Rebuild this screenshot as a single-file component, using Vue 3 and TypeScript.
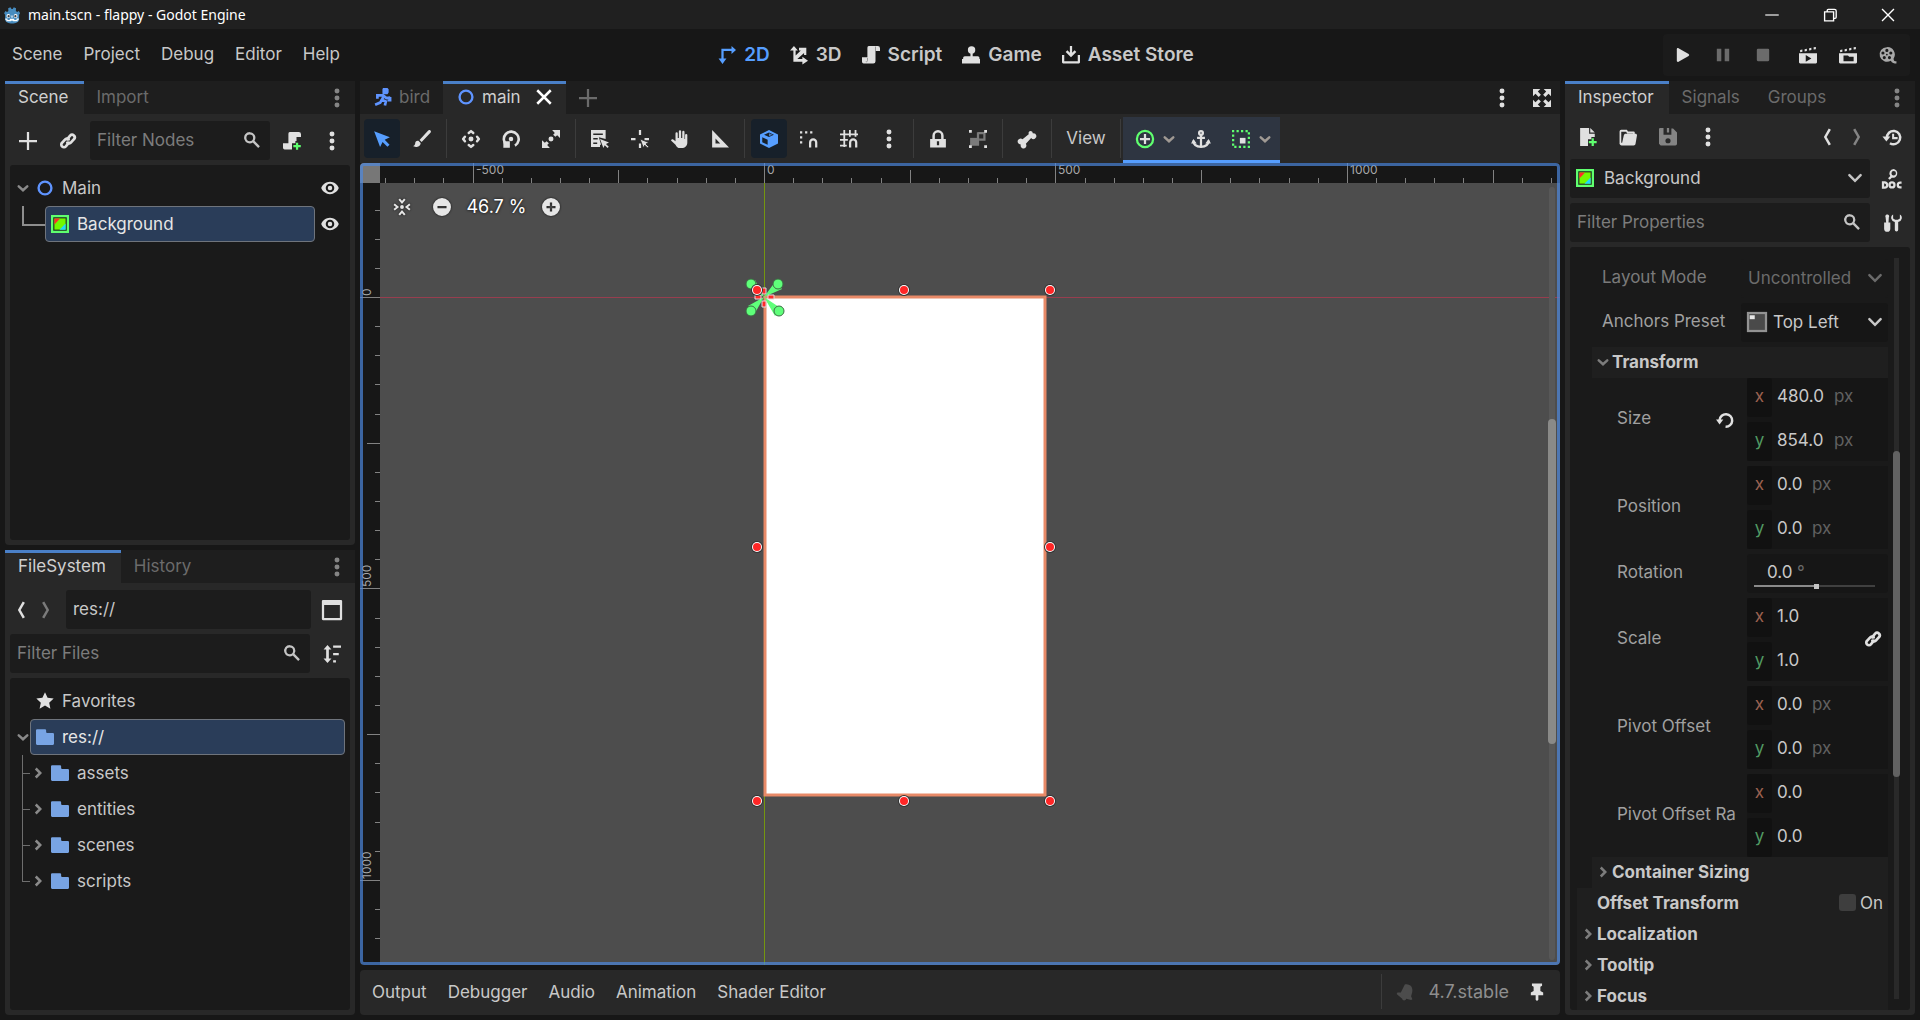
<script setup lang="ts">
import { computed, h, onBeforeUnmount, onMounted, ref } from 'vue'

const magnet = '<path d="M9 15.500v-4.500a2.700 2.700 0 0 1 5.400 0v4.500" fill="none" stroke="currentColor" stroke-width="2"/>'
const cursor = '<path d="M8 8l8 3.2-2.700 1.200 2.500 2.500-1.100 1.100-2.500-2.500L11 16z"/>'
const clapper = '<path d="M1 3.600l2-.4v2l-2 .4zM5 2.800l2-.4v2l-2 .4zM9 2l2-.4v2L9 4zM13 1.200l2-.4v2l-2 .4z"/>'

const icons: Record<string, string> = {
  logo:
    '<path fill="#478cbf" d="M1 6.5l1.2-2 1.4.8 1.2-.8L4.6 2l2-1 1 1.600h1l1-1.600 2 1-.2 2.500 1.200.8 1.400-.8 1.200 2-.9 1.200V12c0 2.500-3.200 3.500-6.200 3.500S1.900 14.500 1.900 12V7.700z"/><g fill="#fff"><circle cx="4.800" cy="8.800" r="1.700"/><circle cx="11.200" cy="8.800" r="1.700"/><path d="M7.500 8.500h1v2h-1z"/><path d="M2 11.200h2v1.200h2v-1h4v1h2v-1.200h2v1h-1v1.400H9V13H7v.6H3v-1.400H2z"/></g><g fill="#414042"><circle cx="5" cy="9" r="1"/><circle cx="11" cy="9" r="1"/></g>',
  add: '<path d="M7 0v7H0v2h7v7h2V9h7V7H9V0z"/>',
  close: '<path d="M2 2l12 12M14 2L2 14" fill="none" stroke="currentColor" stroke-width="2.200"/>',
  link: '<g fill="none" stroke="currentColor" stroke-width="2.400" stroke-linecap="round"><path d="M7.200 6.500L9.900 3.200a2.300 2.300 0 0 1 3.400 3.200L10.700 9.300a2.300 2.300 0 0 1-3.300.2"/><path d="M8.800 9.500l-2.700 3.300a2.300 2.300 0 0 1-3.400-3.200L5.300 6.700a2.300 2.300 0 0 1 3.300-.2"/></g>',
  search: '<path d="M6 1a5 5 0 1 0 2.700 9.200l4.800 4.800 1.500-1.500-4.800-4.800A5 5 0 0 0 6 1zm0 2a3 3 0 1 1 0 6 3 3 0 0 1 0-6z"/>',
  script: '<path d="M6 0a1.500 1.500 0 0 0-1.200 1.500V10H0v4a1.500 1.500 0 0 0 1.500 1.500H10a2 2 0 0 0 2-2V4.500h4V2a2 2 0 0 0-2-2z"/><path d="M4.900 10.500V13a1 1 0 0 1-1.500.9M12 .5v4" fill="none" stroke="#909090" stroke-width=".8"/>',
  scriptAdd: '<path d="M6 0a1.500 1.500 0 0 0-1.200 1.500V10H0v4a1.500 1.500 0 0 0 1.500 1.500H8V10h3V8h1V4.500h4V2a2 2 0 0 0-2-2z"/><path d="M11.500 9.500h2v2h2.300v2h-2.300v2.300h-2v-2.300H9.200v-2h2.300z" fill="#5fff6f"/>',
  dots: '<circle cx="8" cy="1.700" r="2.200"/><circle cx="8" cy="8" r="2.200"/><circle cx="8" cy="14.300" r="2.200"/>',
  down: '<path d="M3 5.500l5 5 5-5" fill="none" stroke="currentColor" stroke-width="2.200" stroke-linecap="round"/>',
  smallDown: '<path d="M4.200 6.500L8 10l3.800-3.500" fill="none" stroke="currentColor" stroke-width="2.200" stroke-linecap="round"/>',
  smallRight: '<path d="M6 4l4 4-4 4" fill="none" stroke="currentColor" stroke-width="2.200"/>',
  back: '<path d="M10.500 1L6.500 8l4 7" fill="none" stroke="currentColor" stroke-width="2.200"/>',
  forward: '<path d="M5.500 1l4 7-4 7" fill="none" stroke="currentColor" stroke-width="2.200"/>',
  eye: '<path fill-rule="evenodd" d="M8 2.500C4.500 2.500 1.300 5 .2 8c1.100 3 4.300 5.500 7.800 5.500S14.700 11 15.800 8C14.700 5 11.500 2.500 8 2.500zm0 1.700a3.800 3.800 0 1 1 0 7.600 3.800 3.800 0 0 1 0-7.600zm0 1.800a2 2 0 1 0 0 4 2 2 0 0 0 0-4z"/>',
  node: '<circle cx="8" cy="8" r="5.700" fill="none" stroke="#5f94ff" stroke-width="2.100"/>',
  runner: '<g fill="none" stroke="#5f94ff" stroke-width="2.400"><path d="M9 6.500L7 10.500l3.500 1.500-.8 3.500M7 10.500L5.500 13 1 14.800M3 9.500V6.500h5l3 2.500 3.500-.5"/></g><path d="M8 0h4l1 1v3l-1 1.500H8.500L7.500 5V1zM13 8h2.500v4H12v-2h1z" fill="#5f94ff"/>',
  colorRect: '<path fill="#5fff6f" d="M0 0h16v16H0z"/><path fill="#1a2a1c" d="M2 2h12v12H2z"/><path fill="#71f900" d="M3 3h10v10H3z"/><path fill="#ff2b2b" d="M3 3h5L3 8.500z"/><path fill="#1fd6ff" d="M13 7.500V13H7.500z"/>',
  axis2d: '<path d="M12 0l4 3.500L12 7V4.500H5V11h2.500L4 16 .5 11H3V2.500h9z"/>',
  axis3d: '<path d="M3.500 0L7 4H5v4.500L9.600 4H8V1.500h6.500V8h-2V6.200L6.500 11.500H11v-2l5 3.700-5 3.300v-2.500H3V4H0z"/>',
  game: '<circle cx="8.500" cy="3.500" r="3.300"/><path d="M7.500 5h2v4h4.500a1.500 1.500 0 0 1 1.500 1.500V12H1v-1.500A1.500 1.500 0 0 1 2.500 9h5zM0 11.500h16v4H0z"/>',
  store: '<path d="M7 0h2v6l2.200-2.200 1.500 1.500L8 10 3.300 5.300l1.500-1.500L7 6zM0 8h2v5.500h12V8h2v6.500a1 1 0 0 1-1 1H1a1 1 0 0 1-1-1z"/>',
  select: '<path d="M1 1l14 5.500-4.600 2.200 4.300 4.300-1.900 1.900-4.300-4.300L6.300 15z"/>',
  brush: '<path d="M15.500.4c-.7-.7-1.500-.5-2 0L5.800 8.800l1.900 1.900 7.800-8.200c.6-.5.600-1.500 0-2.100zM4.800 9.500C2.800 9.200 2 10.500 2 11.500c0 1.500-.8 2.300-2 2.800 1.500 1.300 6.800 1.200 6.800-2.800z"/>',
  move: '<circle cx="8" cy="8" r="2.200"/><g fill="none" stroke="currentColor" stroke-width="2.200" stroke-linecap="round" stroke-linejoin="round"><path d="M6 2.600L8 1l2 1.600M6 13.400L8 15l2-1.600M2.600 6L1 8l1.600 2M13.400 6L15 8l-1.600 2"/></g>',
  rotate: '<circle cx="8" cy="8" r="2"/><path d="M4.500 13.500A6.600 6.600 0 1 1 11.500 13.800" fill="none" stroke="currentColor" stroke-width="2.300"/><path d="M1.200 10H7v5.800H1.200z"/>',
  scale: '<circle cx="8" cy="8" r="2.200"/><path d="M9 0h7v7l-2.500-2.400-1.600 1.500L9.900 4.200l1.500-1.600zM0 9l2.500 2.400 1.600-1.500 2 1.900-1.500 1.600L7 16H0z"/>',
  list: '<path fill-rule="evenodd" d="M0 0h13v8L7 6.500 9 13H8v2H0zm2 3v1.500h8.500V3zm0 4v1.500h4V7zm0 4v1.500h3.500V11z"/>' + cursor,
  pivot: '<path d="M7 0h2v4.500H7zM0 7h4v2H0zM12 7h4v2h-4zM7 12h2v4H7z"/><g stroke="#2a2a2a" stroke-width=".8">' + cursor + '</g>',
  hand: '<path d="M7 1.200a1 1 0 0 1 2 0V7h1V1.700a1 1 0 0 1 2 0V8h.5V4.500a1 1 0 0 1 2 0V11c0 3-2 5-5 5H8c-2 0-3-1-4-3L0 9.300c.5-1.300 1.800-1.300 2.600-.5L4 10V3a1 1 0 0 1 2 0v4h1z"/>',
  ruler: '<path fill-rule="evenodd" d="M1 0v15.500h15zm3 7.500l4.200 4.500H4z"/>',
  cube: '<path fill-rule="evenodd" d="M8 0l8 4v8l-8 4-8-4V4zM8 2.200L3.600 4.300 8 6.300l4.400-2zM2 6.500v4.300l4.800 2.200V8.600z"/><path d="M8 2.800l3.200 1.500L8 5.600z" fill="currentColor" opacity=".7"/>',
  smartSnap: '<path d="M0 1h2v2H0zM4.500 1h2v2h-2zM9 1h2v2H9zM0 5.500h2v2H0zM0 10h2v2H0z"/>' + magnet,
  gridSnap: '<path d="M3 0h1.600v15H3zM8 0h1.600v6H8zM13 0h1.600v6H13zM0 3h16v1.600H0zM0 8h7v1.600H0zM0 13h6v1.600H0z"/>' + magnet,
  lock: '<path fill-rule="evenodd" d="M8 0a5 5 0 0 0-5 5v3H1v7.500h14V8h-2V5a5 5 0 0 0-5-5zm0 2.200A2.800 2.800 0 0 1 10.800 5v3H5.200V5A2.800 2.800 0 0 1 8 2.200zM7 10h2v3.500H7z"/>',
  group: '<g opacity=".45"><path d="M1 7h8v7H1z"/><path d="M8.200 2.800h5.500v5.700H9" fill="none" stroke="currentColor" stroke-width="2"/><path d="M7 2h2v6H7z"/></g><path d="M0 0h2.500v2.500H0zM13.500 0H16v2.500h-2.500zM0 13.500h2.500V16H0zM13.500 13.500H16V16h-2.500z"/>',
  bone: '<path d="M10.500.800a2.500 2.500 0 0 0-1 3L4 8.300a2.600 2.600 0 1 0-1.500 4.500 2.600 2.600 0 1 0 4.500-.5l4.700-5.200A2.600 2.600 0 1 0 13.300 3 2.600 2.600 0 0 0 10.500.800z"/>',
  containerAdd: '<circle cx="8" cy="8" r="7.200" fill="none" stroke="#5fff6f" stroke-width="2"/><path d="M7 3.500h2V7h3.500v2H9v3.500H7V9H3.500V7H7z"/>',
  anchor: '<g fill="none" stroke="currentColor" stroke-width="2"><circle cx="8" cy="2.600" r="1.700"/><path d="M8 4.500V14M4.500 7h7M1.200 9.500c.2 3.500 3 5.400 6.800 5.400s6.600-1.900 6.800-5.400"/></g><path d="M1.200 8l3 4h-5zM14.800 8l2 4h-5z"/>',
  containerLayout: '<path d="M1 1h14v14H1z" fill="none" stroke="#5fff6f" stroke-width="2" stroke-dasharray="2 2" stroke-dashoffset="1"/><path d="M7 7h5v5H7z"/>',
  expand: '<path d="M9.500 0H16v6.500l-2.200-2.200L11 7 9 5l2.700-2.800zM6.500 0H0v6.500l2.200-2.200L5 7l2-2-2.700-2.800zM9.500 16H16V9.500l-2.200 2.200L11 9l-2 2 2.700 2.800zM6.500 16H0V9.500l2.200 2.200L5 9l2 2-2.700 2.800z"/>',
  center: '<circle cx="8" cy="8" r="1.700"/><path d="M5.500 1L8 4l2.500-3M5.500 15L8 12l2.500 3M1 5.500L4 8l-3 2.500M15 5.500L12 8l3 2.500" fill="none" stroke="currentColor" stroke-width="1.800"/>',
  minus: '<path fill-rule="evenodd" d="M8 0a8 8 0 1 1 0 16A8 8 0 0 1 8 0zM4 7v2h8V7z"/>',
  plus: '<path fill-rule="evenodd" d="M8 0a8 8 0 1 1 0 16A8 8 0 0 1 8 0zM7 4v3H4v2h3v3h2V9h3V7H9V4z"/>',
  play: '<path d="M2.500 2.800v10.400c0 .8.800 1.200 1.500.8l9-5.200a1 1 0 0 0 0-1.600l-9-5.200C3.300 1.600 2.500 2 2.500 2.800z"/>',
  pause: '<path d="M2.500 2.500h4v11h-4zM9.500 2.500h4v11h-4z"/>',
  stop: '<rect x="2.500" y="2.500" width="11" height="11" rx="1"/>',
  playScene: clapper + '<path fill-rule="evenodd" d="M0 6.500h16v8a1 1 0 0 1-1 1H1a1 1 0 0 1-1-1zm6 1.500v6l5-3z"/>',
  playCustom: clapper + '<path fill-rule="evenodd" d="M0 6.500h16v8a1 1 0 0 1-1 1H1a1 1 0 0 1-1-1zm4 2v5h9v-4H9l-1-1z"/>',
  movie: '<path fill-rule="evenodd" d="M7 1a6.500 6.500 0 1 0 3.500 12c1 2 3 2.500 5 2.500v-2c-2 0-2.500-.5-2.500-2.500A6.500 6.500 0 0 0 7 1zm0 1.500a1.400 1.400 0 1 1 0 2.800 1.400 1.400 0 0 1 0-2.800zM3.500 4.800a1.400 1.400 0 1 1 0 2.800 1.400 1.400 0 0 1 0-2.800zm7 0a1.400 1.400 0 1 1 0 2.800 1.400 1.400 0 0 1 0-2.800zM7 6.800a.8.800 0 1 1 0 1.600.8.800 0 0 1 0-1.600zM4.700 8.900a1.400 1.400 0 1 1 0 2.800 1.400 1.400 0 0 1 0-2.800zm4.600 0a1.400 1.400 0 1 1 0 2.800 1.400 1.400 0 0 1 0-2.800z"/>',
  newFile: '<path d="M1 0h8v5h5v3h-3v2H8v6H1z"/><path d="M10 0l4 4h-4z"/><path d="M11.200 9h2v2.500h2.500v2h-2.500V16h-2v-2.500H8.700v-2h2.500z" fill="#5fff6f"/>',
  open: '<path d="M2 1.500A1.500 1.500 0 0 0 .5 3v10A2 2 0 0 0 2.500 15.500H13c1 0 1.500-.5 1.700-1.500L16 6.500C16 5.500 15.500 5 14.500 5H14V4a1 1 0 0 0-1-1H8L7 1.500zM2 3.300h4.300l1 1.500H12.500V5H6C5 5 4.500 5.500 4.300 6.500L2.800 13H2z" fill-rule="evenodd"/>',
  save: '<path fill-rule="evenodd" d="M1 0v0A1 1 0 0 0 0 1v13l1.500 1.500H14.500A1.500 1.500 0 0 0 16 14V4L12.500.5H11V6H4V0zm6 0v4h2V0zm1 9a2.300 2.300 0 1 1 0 4.600A2.300 2.300 0 0 1 8 9z"/>',
  history: '<path d="M3.500 9a5.900 5.900 0 1 1 2.700 4.500" fill="none" stroke="currentColor" stroke-width="2.200"/><path d="M-.5 7.500h7L3 12z"/><path d="M9 5v4h4" fill="none" stroke="currentColor" stroke-width="1.800"/>',
  doc: '<path d="M9.500-1a3.900 3.900 0 0 0-3 6.300L4.500 7.300 6 8.600l1.800-1.700A3.900 3.900 0 1 0 9.500-1zm0 1.900a2 2 0 1 1 0 4 2 2 0 0 1 0-4z" fill-rule="evenodd"/><g fill="none" stroke="currentColor" stroke-width="2"><path d="M0 11v4.700h1.400a2.350 2.350 0 0 0 0-4.700z"/><circle cx="8" cy="13.300" r="2.200"/><path d="M16.500 11.200h-1.200a2.150 2.150 0 0 0 0 4.300h1.200"/></g>',
  tools: '<path d="M3.500.5a1.500 1.500 0 0 0-1.200 2.300L2.800 7.500H1V13a2.700 2.700 0 0 0 5.500 0V7.500H4.900L5.200 2.800A1.500 1.500 0 0 0 3.500.5zM9 .5A3.500 3.500 0 0 0 10.500 7v7a1.500 1.500 0 0 0 3 0V7A3.500 3.500 0 0 0 15 .5V4l-1.800 1h-2.400L9 4z"/>',
  revert: '<path d="M3.200 8a5.600 5.600 0 1 1 5.300 6" fill="none" stroke="currentColor" stroke-width="2.200"/><path d="M0 7.500h6.500L3.200 12z"/>',
  bell: '<path d="M6 1.500c4.500-1.500 8 1.500 7.500 6L13 11l1.500 2.500-1 1L9 14c0 2-3 2.500-3.500.5L0 11l.5-1.500L3.500 9z" transform="rotate(8 8 8)"/>',
  pin: '<path d="M3.500.5h9v2l-1.500.8V7l2.500 1.500v2.300H9.200v4L8 16l-1.200-1.200v-4H2.500V8.500L5 7V3.300l-1.500-.8z"/>',
  star: '<path d="M8 .3l2.300 4.900 5.400.6-4 3.700 1.100 5.300L8 12.100l-4.800 2.700 1.100-5.300L.3 5.800l5.400-.6z"/>',
  folder: '<path fill="#78a4e4" d="M1 1a1 1 0 0 0-1 1v12a1 1 0 0 0 1 1h14a1 1 0 0 0 1-1V5.500a1 1 0 0 0-1-1h-5a1 1 0 0 1-1-1V2a1 1 0 0 0-1-1z"/>',
  panel: '<path fill-rule="evenodd" d="M0-1h16a1 1 0 0 1 1 1v16a1 1 0 0 1-1 1H0a1 1 0 0 1-1-1V0a1 1 0 0 1 1-1zm1 4.500V15h14V3.500z"/>',
  sort: '<path d="M4 0l3.500 4H5.200v8h2.300L4 16 .5 12h2.300V4H.5zM9 .5h7v2H9zM9 7h5v2H9zM9 13.500h2.500v2H9z"/>',
  preset: '<path fill="#929292" d="M-1-1h18v18H-1z"/><path fill="#4a4a4a" d="M1 1h14v14H1z"/><path fill="#e6e6e6" d="M1.500 2h4.500v3.500H1.500z"/>',
  winMin: '<path d="M2 8h12" stroke="currentColor" fill="none" stroke-width="1"/>',
  winRestore: '<path d="M3.200 5.200h8v8h-8zM5.500 5V4a1 1 0 0 1 1-1H12a1.500 1.500 0 0 1 1.500 1.500V10a1 1 0 0 1-1 1h-1" stroke="currentColor" fill="none" stroke-width="1.200"/>',
  winClose: '<path d="M2.700 2.700l10.600 10.600M13.300 2.700L2.700 13.300" stroke="currentColor" fill="none" stroke-width="1.200"/>',
}

const Icon = (props: { n: string }) =>
  h('svg', { class: 'ic', viewBox: '0 0 16 16', 'aria-hidden': 'true', innerHTML: icons[props.n] })
Icon.props = ['n']

const menus = ['Scene', 'Project', 'Debug', 'Editor', 'Help']
const screens = [
  { n: 'axis2d', t: '2D' },
  { n: 'axis3d', t: '3D' },
  { n: 'script', t: 'Script' },
  { n: 'game', t: 'Game' },
  { n: 'store', t: 'Asset Store' },
]
const runButtons = ['play', 'pause', 'stop', 'playScene', 'playCustom', 'movie']
const toolGroups = [
  ['select', 'brush'],
  ['move', 'rotate', 'scale'],
  ['list', 'pivot', 'hand', 'ruler'],
  ['cube', 'smartSnap', 'gridSnap', 'dots'],
  ['lock', 'group'],
  ['bone'],
]
const folders = ['assets', 'entities', 'scenes', 'scripts']
const panels = ['Output', 'Debugger', 'Audio', 'Animation', 'Shader Editor']
const sections = ['Localization', 'Tooltip', 'Focus']

interface Vec { label: string; x: string; y: string; unit: string; extra?: string }
const before: Vec[] = [
  { label: 'Size', x: '480.0', y: '854.0', unit: 'px', extra: 'revert' },
  { label: 'Position', x: '0.0', y: '0.0', unit: 'px' },
]
const after: Vec[] = [
  { label: 'Scale', x: '1.0', y: '1.0', unit: '', extra: 'link' },
  { label: 'Pivot Offset', x: '0.0', y: '0.0', unit: 'px' },
  { label: 'Pivot Offset Ra', x: '0.0', y: '0.0', unit: '' },
]
const numWidth = (s: string) => ({ width: `${s.length * 11 - 7}px` })
const rotation = ref(52)
const offsetOn = ref(false)

// Canvas view: one ruler step is 50 scene units.
const view = ref<HTMLElement>()
const size = ref({ w: 0, h: 0 })
const origin = { x: 404, y: 134 }
const step = 29.14
interface Tick { p: number; len: number; label: string }
function ticks(start: number, end: number): Tick[] {
  const out: Tick[] = []
  for (let i = Math.ceil((21 - start) / step); start + i * step < end; i++) {
    const len = i % 10 === 0 ? 20 : i % 5 === 0 ? 13 : 5
    out.push({ p: Math.round(start + i * step), len, label: i % 10 === 0 ? String(i * 50) : '' })
  }
  return out
}
const hTicks = computed(() => ticks(origin.x, size.value.w))
const vTicks = computed(() => ticks(origin.y, size.value.h))
let observer: ResizeObserver | undefined
function measure() {
  if (view.value) size.value = { w: view.value.clientWidth, h: view.value.clientHeight }
}
onMounted(() => {
  measure()
  observer = new ResizeObserver(measure)
  observer.observe(view.value!)
})
onBeforeUnmount(() => observer?.disconnect())

const handles = [
  [397, 127], [544, 127], [690, 127], [397, 384], [690, 384], [397, 638], [544, 638], [690, 638],
]
const pins = [[391, 121], [418, 121], [391, 148], [419, 148]]
</script>

<template>
  <div class="app">
    <header class="title">
      <Icon n="logo" />
      <span class="title-text">main.tscn - flappy - Godot Engine</span>
      <div class="win">
        <button aria-label="Minimize"><Icon n="winMin" /></button>
        <button aria-label="Restore"><Icon n="winRestore" /></button>
        <button aria-label="Close"><Icon n="winClose" /></button>
      </div>
    </header>

    <div class="menubar">
      <nav class="menus"><button v-for="m in menus" :key="m">{{ m }}</button></nav>
      <nav class="screens">
        <button v-for="(s, i) in screens" :key="s.t" :class="{ on: i === 0 }"><Icon :n="s.n" />{{ s.t }}</button>
      </nav>
      <div class="run">
        <button v-for="r in runButtons" :key="r" :class="r" :aria-label="r"><Icon :n="r" /></button>
      </div>
    </div>

    <main class="work">
      <div class="side">
        <section class="dock">
          <div class="tabs">
            <button class="tab on">Scene</button><button class="tab">Import</button>
            <button class="more" aria-label="Dock options"><Icon n="dots" /></button>
          </div>
          <div class="body">
            <div class="row">
              <button class="tool" aria-label="Add node"><Icon n="add" /></button>
              <button class="tool" aria-label="Instance scene"><Icon n="link" /></button>
              <div class="field grow"><input placeholder="Filter Nodes" aria-label="Filter Nodes" /><Icon n="search" /></div>
              <button class="tool" aria-label="Attach script"><Icon n="scriptAdd" /></button>
              <button class="tool" aria-label="More"><Icon n="dots" /></button>
            </div>
            <div class="tree">
              <div class="item">
                <span class="arrow"><Icon n="smallDown" /></span>
                <span class="cell"><Icon n="node" />Main</span>
                <Icon n="eye" class="eye" />
              </div>
              <div class="item">
                <span class="elbow"></span>
                <span class="cell sel"><Icon n="colorRect" />Background</span>
                <Icon n="eye" class="eye" />
              </div>
            </div>
          </div>
        </section>

        <section class="dock">
          <div class="tabs">
            <button class="tab on">FileSystem</button><button class="tab">History</button>
            <button class="more" aria-label="Dock options"><Icon n="dots" /></button>
          </div>
          <div class="body">
            <div class="row path">
              <button class="nav" aria-label="Back"><Icon n="back" /></button>
              <button class="nav dim" aria-label="Forward"><Icon n="forward" /></button>
              <div class="field grow"><input value="res://" aria-label="Path" /></div>
              <button class="tool" aria-label="Split mode"><Icon n="panel" /></button>
            </div>
            <div class="row">
              <div class="field grow"><input placeholder="Filter Files" aria-label="Filter Files" /><Icon n="search" /></div>
              <button class="tool" aria-label="Sort"><Icon n="sort" /></button>
            </div>
            <div class="tree">
              <div class="item"><span class="arrow"></span><span class="cell"><Icon n="star" />Favorites</span></div>
              <div class="item"><span class="arrow"><Icon n="smallDown" /></span><span class="cell sel"><Icon n="folder" />res://</span></div>
              <div v-for="f in folders" :key="f" class="item branch">
                <span class="twig"></span><span class="arrow"><Icon n="smallRight" /></span>
                <span class="cell"><Icon n="folder" />{{ f }}</span>
              </div>
            </div>
          </div>
        </section>
      </div>

      <div class="center">
        <div class="tabs">
          <button class="tab scene"><Icon n="runner" />bird</button>
          <button class="tab scene on"><Icon n="node" />main<Icon n="close" class="x" /></button>
          <button class="plus" aria-label="New scene"><Icon n="add" /></button>
          <button class="more first" aria-label="Scene options"><Icon n="dots" /></button>
          <button class="more" aria-label="Distraction free"><Icon n="expand" /></button>
        </div>
        <div class="toolbar">
          <template v-for="(g, gi) in toolGroups" :key="gi">
            <button v-for="t in g" :key="t" class="tool" :class="{ on: t === 'select' || t === 'cube' }" :aria-label="t"><Icon :n="t" /></button>
            <i class="sep"></i>
          </template>
          <button class="view">View</button>
          <i class="sep"></i>
          <div class="context">
            <button class="tool wide" aria-label="Container"><Icon n="containerAdd" /><Icon n="smallDown" class="chev" /></button>
            <button class="tool" aria-label="Anchor"><Icon n="anchor" /></button>
            <button class="tool wide" aria-label="Layout"><Icon n="containerLayout" /><Icon n="smallDown" class="chev" /></button>
          </div>
        </div>
        <div ref="view" class="viewport">
          <svg class="canvas" width="100%" height="100%">
            <rect width="100%" height="100%" fill="#4d4d4d" />
            <rect x="0" y="134" width="100%" height="1" fill="#b03a50" opacity=".75" />
            <rect x="404" y="0" width="1" height="100%" fill="#74960f" />
            <rect x="405" y="134" width="280" height="498" fill="#fff" stroke="#e88a68" stroke-width="3" />
            <g fill="#171717"><rect width="100%" height="20" /><rect width="20" height="100%" /></g>
            <g fill="#828282">
              <rect v-for="t in hTicks" :key="t.p" :x="t.p" :y="20 - t.len" width="1" :height="t.len" />
              <rect v-for="t in vTicks" :key="t.p" :y="t.p" :x="20 - t.len" height="1" :width="t.len" />
            </g>
            <g class="marks">
              <text v-for="t in hTicks" :key="t.p" :x="t.p + 3" y="11">{{ t.label }}</text>
              <text v-for="t in vTicks" :key="t.p" :transform="`translate(11 ${t.p - 1}) rotate(-90)`">{{ t.label }}</text>
            </g>
            <rect width="20" height="20" fill="#777" />
            <g fill="#5fff7a" stroke="#3b6b43" stroke-width="1">
              <path d="M404 134l11-15 7 7zM404 134l-16-10 7-7zM404 134l-9 16-7-7zM404 134l18 12-7 7z" stroke="none" />
              <circle v-for="p in pins" :key="p.join()" :cx="p[0]" :cy="p[1]" r="5" />
            </g>
            <g fill="#ff2a2a" stroke="#ddd" stroke-width="1">
              <path d="M402 125h4v6h-4zM402 138h4v6h-4zM395 132h6v4h-6zM408 132h6v4h-6z" />
            </g>
            <g v-for="p in handles" :key="p.join()">
              <circle :cx="p[0]" :cy="p[1]" r="6" fill="#333" /><circle :cx="p[0]" :cy="p[1]" r="5" fill="#fff" /><circle :cx="p[0]" :cy="p[1]" r="4" fill="#ff2626" />
            </g>
          </svg>
          <div class="zoom">
            <button aria-label="Center view"><Icon n="center" /></button>
            <button aria-label="Zoom out"><Icon n="minus" /></button>
            <span>46.7 %</span>
            <button aria-label="Zoom in"><Icon n="plus" /></button>
          </div>
          <div class="vscroll"><span></span></div>
          <div class="focus"></div>
        </div>
        <footer class="bottom">
          <button v-for="p in panels" :key="p">{{ p }}</button>
          <i class="sep"></i>
          <Icon n="bell" class="bell" />
          <span class="version">4.7.stable</span>
          <button class="pinned" aria-label="Pin panel"><Icon n="pin" /></button>
        </footer>
      </div>

      <div class="side">
        <section class="dock">
          <div class="tabs">
            <button class="tab on">Inspector</button><button class="tab">Signals</button><button class="tab">Groups</button>
            <button class="more" aria-label="Dock options"><Icon n="dots" /></button>
          </div>
          <div class="body">
            <div class="row res">
              <button class="tool" aria-label="New resource"><Icon n="newFile" /></button>
              <button class="tool" aria-label="Load"><Icon n="open" /></button>
              <button class="tool dim" aria-label="Save"><Icon n="save" /></button>
              <button class="tool" aria-label="More"><Icon n="dots" /></button>
              <span class="grow"></span>
              <button class="nav" aria-label="Previous"><Icon n="back" /></button>
              <button class="nav dim" aria-label="Next"><Icon n="forward" /></button>
              <button class="tool" aria-label="History"><Icon n="history" /></button>
            </div>
            <div class="row">
              <button class="field grow object"><Icon n="colorRect" /><span class="grow">Background</span><Icon n="down" /></button>
              <button class="tool" aria-label="Documentation"><Icon n="doc" /></button>
            </div>
            <div class="row">
              <div class="field grow"><input placeholder="Filter Properties" aria-label="Filter Properties" /><Icon n="search" /></div>
              <button class="tool" aria-label="Property tools"><Icon n="tools" /></button>
            </div>
            <div class="inspect">
              <div class="props">
                <div class="prop off">
                  <label for="mode">Layout Mode</label>
                  <div class="pick"><select id="mode" disabled><option>Uncontrolled</option></select><Icon n="down" /></div>
                </div>
                <div class="prop">
                  <label for="preset">Anchors Preset</label>
                  <div class="pick"><Icon n="preset" /><select id="preset"><option>Top Left</option></select><Icon n="down" /></div>
                </div>
                <button class="head sub"><Icon n="smallDown" />Transform</button>
                <div class="group">
                  <div v-for="v in before" :key="v.label" class="prop vec">
                    <label :for="v.label">{{ v.label }}</label><Icon v-if="v.extra" :n="v.extra" />
                    <div class="pair">
                      <div class="num"><b class="px">x</b><input :id="v.label" :value="v.x" :style="numWidth(v.x)" /><span>{{ v.unit }}</span></div>
                      <div class="num"><b class="py">y</b><input :value="v.y" :aria-label="v.label + ' y'" :style="numWidth(v.y)" /><span>{{ v.unit }}</span></div>
                    </div>
                  </div>
                  <div class="prop">
                    <label for="rot">Rotation</label>
                    <div class="spin">
                      <div class="deg"><input id="rot" value="0.0" :style="numWidth('0.0')" /><span>°</span></div>
                      <input v-model="rotation" type="range" min="0" max="100" aria-label="Rotation slider" />
                    </div>
                  </div>
                  <div v-for="v in after" :key="v.label" class="prop vec">
                    <label :for="v.label">{{ v.label }}</label>
                    <div class="pair">
                      <div class="num"><b class="px">x</b><input :id="v.label" :value="v.x" :style="numWidth(v.x)" /><span>{{ v.unit }}</span></div>
                      <div class="num"><b class="py">y</b><input :value="v.y" :aria-label="v.label + ' y'" :style="numWidth(v.y)" /><span>{{ v.unit }}</span></div>
                      <button v-if="v.extra" class="ratio" aria-label="Link axes"><Icon :n="v.extra" /></button>
                    </div>
                  </div>
                </div>
                <button class="head sub"><Icon n="smallRight" />Container Sizing</button>
                <div class="head check">
                  <span class="grow">Offset Transform</span>
                  <input id="on" v-model="offsetOn" type="checkbox" /><label for="on">On</label>
                </div>
                <button v-for="s in sections" :key="s" class="head"><Icon n="smallRight" />{{ s }}</button>
              </div>
              <div class="pscroll"><span></span></div>
            </div>
          </div>
        </section>
      </div>
    </main>
  </div>
</template>

<style>
body { background: #171717; overflow: hidden; }
</style>

<style scoped>
* { box-sizing: border-box; }
.app { height: 100vh; display: flex; flex-direction: column; background: #171717; color: #c8c8c8; font: 17px/24px Inter, "Noto Sans", sans-serif; }
button, input, select { font: inherit; color: inherit; background: none; border: 0; padding: 0; margin: 0; outline: 0; }
button { display: flex; align-items: center; white-space: nowrap; }
.ic { width: 18px; height: 18px; flex: none; fill: currentColor; overflow: visible; display: block; }
.grow { flex: 1; min-width: 0; text-align: left; }
.dim { opacity: .45; }

.title { height: 29px; flex: none; display: flex; align-items: center; padding: 0 3px; gap: 7px; background: #202020; color: #fff; }
.title-text { font: 14px/20px "Noto Sans", sans-serif; }
.win { margin-left: auto; display: flex; }
.win button { width: 58px; height: 29px; justify-content: center; }

.menubar { height: 52px; flex: none; display: grid; grid-template-columns: 1fr auto 1fr; align-items: center; padding: 0 10px 0 2px; }
.menus { display: flex; gap: 1px; }
.menus button { padding: 0 10px 2px; height: 38px; }
.screens { display: flex; gap: 20px; font-size: 19px; font-weight: 600; }
.screens button { gap: 8px; }
.screens .on { color: #569eff; }
.screens .ic { color: #e0e0e0; }
.screens .on .ic { color: #569eff; }
.run { justify-self: end; display: flex; align-items: center; height: 42px; width: 247px; background: #1b1b1b; border-radius: 4px; color: #e0e0e0; }
.run button { width: 40px; height: 38px; justify-content: center; }
.run .pause, .run .stop { color: #6b6b6b; }
.run .playScene { margin-left: 5px; }
.run .movie { color: #a8a8a8; }

.work { flex: 1; min-height: 0; display: flex; gap: 5px; padding: 0 5px 5px; }
.side { width: 350px; flex: none; display: flex; flex-direction: column; gap: 5px; }
.dock { flex: 1 1 0; min-height: 0; display: flex; flex-direction: column; }
.dock + .dock { flex-basis: 1px; }
.tabs { height: 33px; flex: none; display: flex; background: #1e1e1e; }
.tab { padding: 0 15px 5px 13px; color: #6b6b6b; border-top: 3px solid transparent; }
.tab.on { background: #282828; border-color: #4a80c8; color: #d0d0d0; }
.more { margin-left: auto; width: 36px; justify-content: center; color: #858585; }
.body { flex: 1; min-height: 0; display: flex; flex-direction: column; gap: 5px; padding: 7px 5px 5px; background: #282828; border-radius: 0 0 4px 4px; }
.row { height: 39px; flex: none; display: flex; align-items: center; gap: 4px; }
.tool { width: 36px; height: 39px; flex: none; justify-content: center; color: #e0e0e0; border-radius: 4px; }
.tool.on { background: #17202a; color: #569eff; }
.nav { width: 22px; height: 39px; justify-content: center; color: #e0e0e0; }
.field { height: 39px; display: flex; align-items: center; padding: 0 9px 2px 7px; background: #1c1c1c; border-radius: 3px; }
.field input { flex: 1; min-width: 0; }
.field .ic { color: #c4c4c4; }
input::placeholder { color: #7c7c7c; opacity: 1; }

.tree { flex: 1; background: #1a1a1a; border-radius: 3px; padding: 5px; }
.item { height: 36px; display: flex; align-items: center; }
.arrow { width: 15px; display: flex; justify-content: center; color: #8a8a8a; }
.cell { flex: 1; height: 36px; display: flex; align-items: center; gap: 8px; padding-left: 6px; }
.cell .ic { color: #e0e0e0; }
.sel { background: #2a3d59; border: 1px solid #6f747c; border-radius: 4px; padding-left: 5px; color: #e6e6e6; }
.eye { width: 18px; margin: 0 6px; color: #e0e0e0; }
.elbow { width: 23px; height: 20px; margin-left: 7px; align-self: flex-start; border: solid #8e8e8e; border-width: 0 0 2px 2px; }
.twig { width: 8px; height: 36px; margin-left: 7px; border-left: 1px solid #6e6e6e; background: linear-gradient(#6e6e6e, #6e6e6e) 0 18px / 8px 1px no-repeat; }
.branch:last-child .twig { height: 19px; align-self: flex-start; }
.path { gap: 3px; }
.path .field { margin-left: 6px; }

.center { flex: 1; min-width: 0; display: flex; flex-direction: column; }
.scene { gap: 7px; padding-left: 14px; padding-right: 13px; }
.scene .x { color: #fff; margin-left: 7px; }
.plus { width: 44px; justify-content: center; color: #6b6b6b; }
.first { margin-right: 4px; }
.center .more { color: #e0e0e0; }
.center .first + .more { margin-left: 0; }
.toolbar { height: 49px; flex: none; display: flex; align-items: center; gap: 4px; padding-left: 4px; background: #282828; }
.sep { width: 5px; height: 39px; flex: none; background: linear-gradient(#3c3c3c, #3c3c3c) 2px 0 / 1px 100% no-repeat; }
.view { width: 56px; justify-content: center; padding-bottom: 2px; }
.context { margin-left: -4px; height: 46px; align-self: flex-end; display: flex; align-items: center; gap: 4px; padding: 0 5px 0 4px; background: #2e3541; border-bottom: 3px solid #569eff; }
.wide { width: 52px; gap: 6px; justify-content: flex-start; padding-left: 9px; }
.chev { color: #a09a94; margin-right: -5px; }
.viewport { flex: 1; min-height: 0; position: relative; overflow: hidden; border-radius: 4px; }
.canvas { position: absolute; inset: 0; display: block; }
.marks { fill: #a8a8a8; font-size: 12px; }
.zoom { position: absolute; left: 33px; top: 32px; display: flex; align-items: center; font-size: 18px; color: #e6e6e6; text-shadow: 0 0 3px #000; }
.zoom .ic { filter: drop-shadow(0 0 1px #111); }
.zoom button + button { margin-left: 22px; }
.zoom span { width: 91px; text-align: center; color: #fff; }
.vscroll { position: absolute; right: 5px; top: 24px; bottom: 5px; width: 6px; background: #585858; border-radius: 3px; }
.vscroll span { position: absolute; left: -1px; width: 8px; top: 30%; height: 42%; background: #8a8a88; border-radius: 4px; }
.focus { position: absolute; inset: 0; border: 3px solid #4d88dfb0; border-radius: 4px; pointer-events: none; }
.bottom { height: 45px; flex: none; margin-top: 5px; display: flex; align-items: center; gap: 1px; padding: 0 14px 2px 2px; background: #282828; border-radius: 4px; }
.bottom button { padding: 0 10px; }
.bottom .sep { margin-left: auto; height: 35px; }
.bell { margin: 0 12px; color: #4c4c4c; }
.version { font-size: 18px; color: #8e8e8e; }
.bottom .pinned { padding: 0 0 0 18px; color: #e0e0e0; }

.res { height: 35px; margin-top: -2px; }
.res .dim { opacity: .5; }
.res .nav { width: 26px; }
.object { padding: 0 6px 2px; gap: 10px; }
.inspect { flex: 1; min-height: 0; display: flex; overflow: hidden; background: #1a1a1a; border-radius: 3px; padding-left: 7px; }
.props { flex: 1; min-width: 0; padding-top: 12px; overflow: hidden; }
.prop { display: flex; align-items: center; margin-bottom: 5px; padding-left: 25px; color: #a0a0a0; }
.prop > label { flex: 1; min-width: 0; padding-bottom: 3px; white-space: nowrap; overflow: hidden; }
.prop.off { color: #7a7a7a; }
.pick { width: 147px; height: 39px; display: flex; align-items: center; padding: 0 4px 2px 7px; background: #161616; border-radius: 3px; color: #c8c8c8; }
.pick select { flex: 1; min-width: 0; appearance: none; opacity: 1; }
.pick .ic + select { margin-left: 7px; }
.off .pick { background: #1a1a1a; color: #6b6b6b; }
.head { height: 31px; width: 100%; display: flex; align-items: center; padding: 0 0 2px 2px; background: #1f1f1f; font-weight: 700; color: #c8c8c8; }
.head .ic { color: #7c7c7c; }
.sub { margin-left: 15px; width: calc(100% - 15px); }
.group .prop { padding-left: 40px; }
.group { margin-bottom: -5px; }
.vec > .ic { color: #e0e0e0; margin-right: 13px; }
.pair { position: relative; width: 141px; background: #161616; display: flex; flex-direction: column; gap: 5px; }
.num { height: 39px; display: flex; align-items: center; color: #c8c8c8; }
.num b { width: 25px; height: 39px; line-height: 37px; text-align: center; font-weight: 400; background: #111; border-radius: 3px; margin-right: 5px; }
.num input, .num span { padding-bottom: 3px; }
.px { color: #9c6250; }
.py { color: #519a63; }
.num span { margin-left: 9px; color: #616161; }
.ratio { position: absolute; right: 6px; top: 32px; color: #e0e0e0; }
.spin { width: 141px; height: 39px; padding: 6px 13px 0 7px; background: #161616; border-radius: 3px; }
.deg { display: flex; height: 24px; padding-left: 13px; color: #c8c8c8; }
.deg span { margin-left: 4px; color: #6b6b6b; }
input[type="range"] { appearance: none; display: block; width: 121px; height: 5px; background: linear-gradient(90deg, #8a8a8a 52%, #404040 52%) 0 1px / 100% 2px no-repeat; }
input[type="range"]::-webkit-slider-thumb { appearance: none; width: 5px; height: 5px; background: #c4c4c4; }
.check { padding: 0 5px 2px 20px; gap: 4px; }
.check label { font-weight: 400; }
input[type="checkbox"] { appearance: none; width: 17px; height: 17px; background: #3e3e3e; border-radius: 3px; }
.pscroll { width: 22px; position: relative; flex: none; margin: 11px 0; background: linear-gradient(#292929, #292929) 6px 0 / 5px 100% no-repeat; }
.pscroll span { position: absolute; left: 5px; width: 7px; top: 26%; height: 44%; background: #626262; border-radius: 4px; }
</style>
